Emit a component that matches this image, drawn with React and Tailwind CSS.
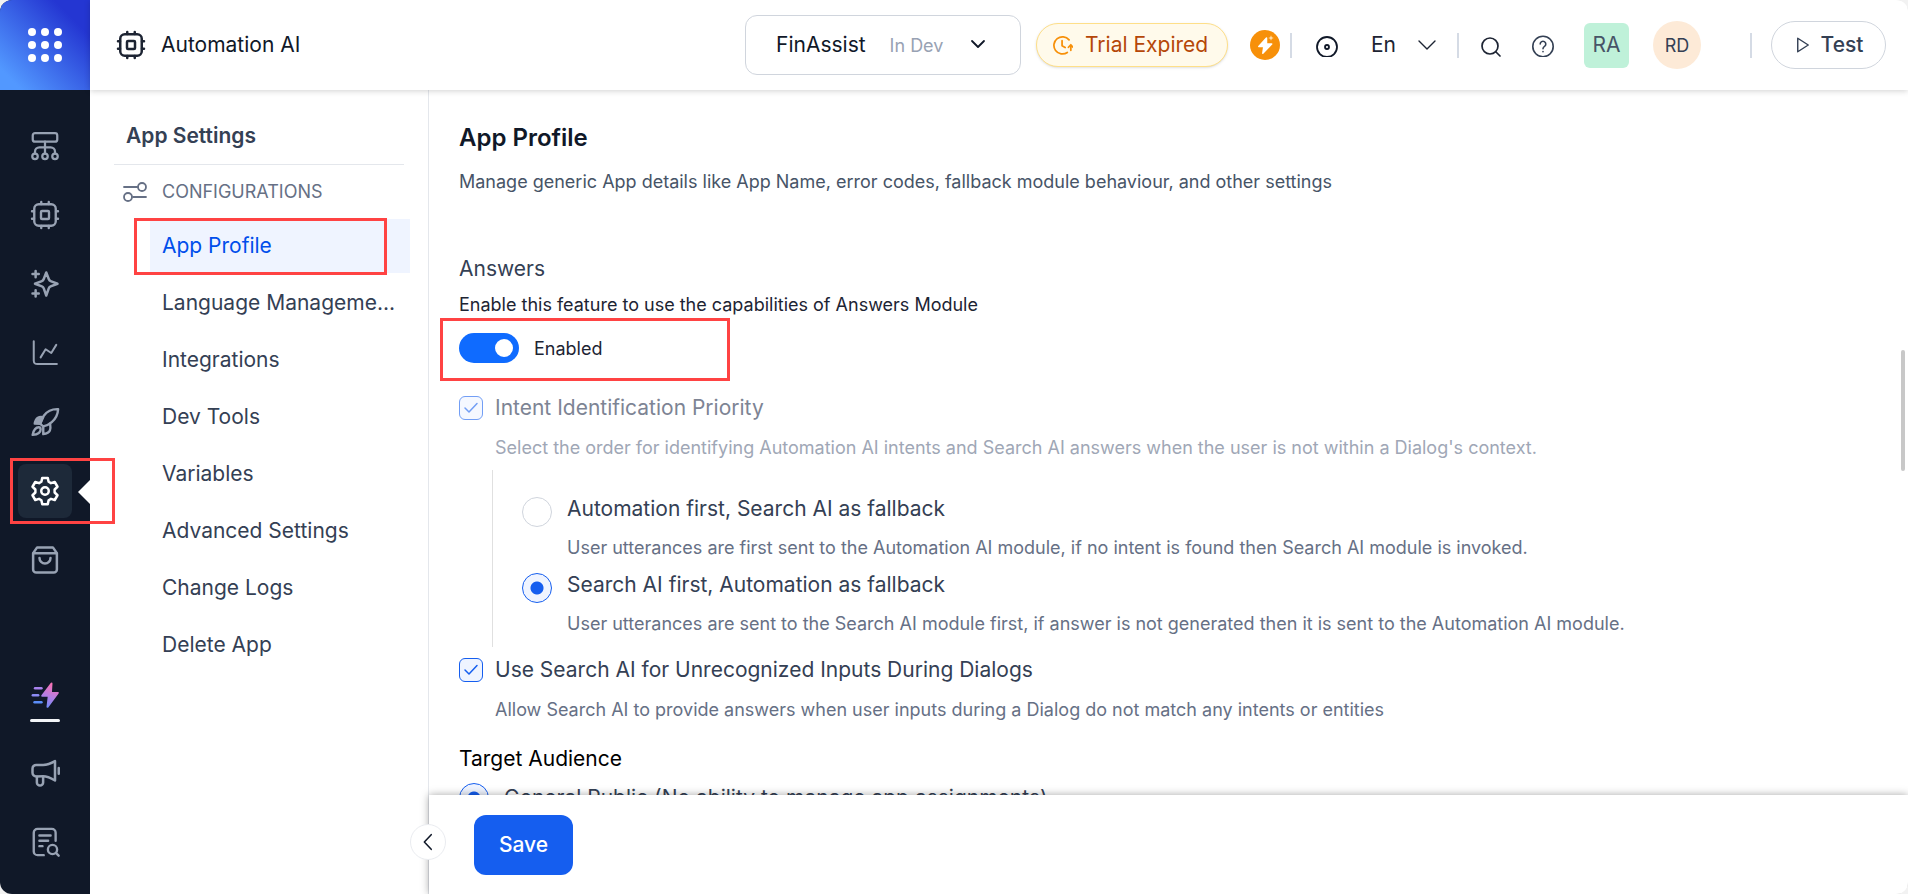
import React from "react";

function Icon({ size = 30, stroke = 2, className = "", children, box = "0 0 24 24" }) {
  return (
    <svg
      aria-hidden="true"
      width={size}
      height={size}
      viewBox={box}
      fill="none"
      stroke="currentColor"
      strokeWidth={stroke}
      strokeLinecap="round"
      strokeLinejoin="round"
      className={"shrink-0 " + className}
    >
      {children}
    </svg>
  );
}

const ChipIcon = (props) => (
  <Icon {...props}>
    <rect x="3.4" y="3.4" width="17.2" height="17.2" rx="3.6" />
    <rect x="8.8" y="8.8" width="6.4" height="6.4" rx="0.8" />
    <path d="M9 1.6v1.6M15 1.6v1.6M9 20.8v1.6M15 20.8v1.6M1.6 9h1.6M1.6 15h1.6M20.8 9h1.6M20.8 15h1.6" />
  </Icon>
);

const FlowIcon = () => (
  <Icon stroke={1.8}>
    <rect x="2.2" y="1.7" width="19.6" height="6.8" rx="1.8" />
    <path d="M12 8.500v9.500M4 18v-1.500A3.500 3.500 0 0 1 7.500 13h9a3.500 3.500 0 0 1 3.500 3.500V18" />
    <circle cx="4" cy="20.200" r="2.200" />
    <circle cx="12" cy="20.200" r="2.200" />
    <circle cx="20" cy="20.200" r="2.200" />
  </Icon>
);

const SparkIcon = () => (
  <Icon stroke={2}>
    <path d="M13 2.800l2 5.200c.3.900.700 1.400 1.500 1.700l5.500 2.100-5.500 2.100c-.8.300-1.200.8-1.500 1.600l-2 5.700-2-5.700c-.3-.8-.7-1.300-1.500-1.600L4 11.800l5.500-2.100c.8-.3 1.200-.8 1.500-1.700z" />
    <path d="M4.500 1.500v5M2 4h5M4.500 17v5M2 19.500h5" />
  </Icon>
);

const ChartIcon = () => (
  <Icon stroke={1.600}>
    <path d="M3 2.500v15.500c0 1.400.3 2 1 2.400.500.300 1 .3 2 .3h15.500" />
    <path d="M8.500 15.500l4-6.500 4.500 3 4-6.500" />
  </Icon>
);

const RocketIcon = () => (
  <Icon stroke={1.900}>
    <path d="M22.500 1.700c-4.500-.2-8.500 1.300-11.300 5.100C9.600 9 8.600 11.300 8.200 13.500l2.400 2c2.200-.4 4.800-1.600 6.800-3.400 3.600-3.100 4.900-6.600 5.100-10.400z" />
    <path d="M10.500 8.200c-3-.6-4.600 0-5.800 2.200-.5 1-.8 2-.9 2.900l4.400.2z" fill="currentColor" />
    <path d="M10.600 15.700v6c2.300-.3 4.500-.9 5.300-2.900.600-1.600.500-3.500.2-5.400M7 16.200c-2.500 0-4 1.800-4.900 6.100 4.400-.5 6.400-1.900 6.400-4.400 0-.9-.6-1.700-1.500-1.700z" />
  </Icon>
);

const GearIcon = () => (
  <Icon stroke={2}>
    <circle cx="12" cy="12" r="3" />
    <path d="M9.800 1.500h4.400l.7 3.100 1.900 1.100 3-.9 2.200 3.800-2.300 2.200v2.400l2.300 2.200-2.200 3.800-3-.9-1.900 1.100-.7 3.100H9.800l-.7-3.100-1.900-1.100-3 .9L2 15.400l2.300-2.200v-2.400L2 8.600l2.200-3.800 3 .9 1.900-1.100z" />
  </Icon>
);

const BagIcon = () => (
  <Icon stroke={2}>
    <path d="M2.500 6.500v13a2.500 2.500 0 0 0 2.500 2.500h14a2.500 2.500 0 0 0 2.500-2.500v-13L18.300 1.900H5.700z" />
    <path d="M2.800 6.500h18.400M7.600 10.400a4.400 4.400 0 0 0 8.800 0" />
  </Icon>
);

const MegaphoneIcon = () => (
  <Icon stroke={2}>
    <path d="M20 2.500v15.500c-4-2.300-6-3.300-9.500-3.300H5a3 3 0 0 1-3-3V8.500a3 3 0 0 1 3-3h5.500c4 0 6.500-1.300 9.500-3z" />
    <path d="M5.500 15v4.500a2.500 2.500 0 0 0 5 0V15M23 8v4.500" />
  </Icon>
);

const DocSearchIcon = () => (
  <Icon stroke={1.900}>
    <path d="M20.500 11V4.500a3 3 0 0 0-3-3H6a3 3 0 0 0-3 3v15a3 3 0 0 0 3 3h5" />
    <path d="M7.500 6.800h9M7.500 11h7M7.500 15.300h2.500" />
    <circle cx="18" cy="18" r="3.700" />
    <path d="M20.900 20.900l2 2" />
  </Icon>
);

const QuickIcon = () => (
  <svg aria-hidden="true" width="30" height="30" viewBox="0 0 30 30" className="shrink-0">
    <defs>
      <linearGradient id="quick" gradientUnits="userSpaceOnUse" x1="20" y1="4" x2="12" y2="26">
        <stop offset="0" stopColor="#f472b6" />
        <stop offset="0.55" stopColor="#b07fe6" />
        <stop offset="1" stopColor="#6b8cf8" />
      </linearGradient>
    </defs>
    <path d="M21.500 3.500 12.200 15.800h6.600l-1.300 11 10.300-13.900h-6.900z" fill="url(#quick)" stroke="url(#quick)" strokeWidth="2" strokeLinejoin="round" />
    <g strokeWidth="2.400" strokeLinecap="round">
      <path d="M5 8.200h6.500" stroke="#a882ee" />
      <path d="M2.800 15.200h5.400" stroke="#8b8af3" />
      <path d="M4.500 22.200h7" stroke="#5b8df8" />
    </g>
  </svg>
);

const railItems = [
  { name: "Flows", icon: <FlowIcon /> },
  { name: "Automation", icon: <ChipIcon stroke={1.900} /> },
  { name: "Generative AI", icon: <SparkIcon /> },
  { name: "Analytics", icon: <ChartIcon /> },
  { name: "Deploy", icon: <RocketIcon /> },
  { name: "Settings", icon: <GearIcon />, active: true },
  { name: "Marketplace", icon: <BagIcon /> },
];

function Highlight({ className }) {
  return <div aria-hidden="true" className={"pointer-events-none absolute z-30 border-3 border-[#ff4343] " + className} />;
}

function Rail() {
  return (
    <nav aria-label="Main" className="flex w-[90px] shrink-0 flex-col bg-[#101828] text-[#98a2b3]">
      <button
        type="button"
        aria-label="All products"
        className="flex size-[90px] shrink-0 items-center justify-center bg-[linear-gradient(45deg,#5298ff_12%,#2436d2_80%)]"
      >
        <svg aria-hidden="true" width="36" height="36" viewBox="0 0 36 36" fill="#fff">
          {[5, 18, 31].map((y) => [5, 18, 31].map((x) => <circle key={x + "-" + y} cx={x} cy={y} r="4" />))}
        </svg>
      </button>
      <div className="flex flex-col items-center gap-[15px] pt-[29px]">
        {railItems.map((item) => (
          <div key={item.name} className="relative flex w-full justify-center">
            <button
              type="button"
              aria-label={item.name}
              className={
                item.active
                  ? "flex size-[54px] items-center justify-center rounded-lg bg-[#1d2939] text-white"
                  : "flex size-[54px] items-center justify-center rounded-lg"
              }
            >
              {item.icon}
            </button>
            {item.active && (
              <>
                <svg aria-hidden="true" width="12" height="24" viewBox="0 0 12 24" className="absolute top-4 right-0">
                  <path d="M12 0v24L0 12z" fill="#fff" />
                </svg>
                <Highlight className="-top-1.5 left-[10px] h-[66px] w-[105px]" />
              </>
            )}
          </div>
        ))}
      </div>
      <div className="mt-auto flex flex-col items-center gap-[15px] pb-[25px]">
        <button type="button" aria-label="Quick start" className="mb-[9px] flex h-[54px] w-[54px] flex-col items-center justify-end gap-[9px]">
          <QuickIcon />
          <span className="h-[3px] w-[30px] shrink-0 rounded-full bg-[#f2f4f7]" />
        </button>
        <button type="button" aria-label="Announcements" className="flex size-[54px] items-center justify-center">
          <MegaphoneIcon />
        </button>
        <button type="button" aria-label="Logs" className="flex size-[54px] items-center justify-center">
          <DocSearchIcon />
        </button>
      </div>
    </nav>
  );
}

function Divider({ className = "" }) {
  return <span className={"h-[25px] w-[2px] shrink-0 bg-[#d5dbe5] " + className} />;
}

function Header() {
  return (
    <header className="relative z-20 flex h-[90px] shrink-0 items-center bg-white pr-[22px] pl-[26px] shadow-[0_1px_6px_rgba(0,0,0,0.18)]">
      <ChipIcon stroke={2} className="text-[#1d2433]" />
      <h1 className="ml-[15px] text-[21px] leading-[30px] text-[#101828]">Automation AI</h1>

      <button
        type="button"
        aria-haspopup="listbox"
        className="ml-auto flex h-[60px] w-[276px] shrink-0 items-center rounded-xl border border-[#d0d5dd] px-[30px] text-[#101828]"
      >
        <span className="text-[21px]">FinAssist</span>
        <span className="ml-6 text-[18px] text-[#98a2b3]">In Dev</span>
        <Icon size={24} stroke={1.800} className="ml-auto">
          <path d="M6 8l6 6 6-6" />
        </Icon>
      </button>

      <div className="ml-[15px] flex h-[44px] w-[192px] shrink-0 items-center rounded-full border border-[#fedf89] bg-[#fffaeb] pl-[15px] text-[21px] text-[#b54708] shadow-sm">
        <Icon size={21} stroke={2} className="mr-3 text-[#f79009]">
          <path d="M17.500 20A9.800 9.800 0 1 1 19.500 5.600M11.500 6.500v5.800l3.500 2M21.500 17.500v-6M18.800 14l2.700-2.800L24 14" />
        </Icon>
        Trial Expired
      </div>

      <svg role="img" aria-label="Upgrade" width="30" height="30" viewBox="0 0 30 30" className="ml-[22px] shrink-0">
        <circle cx="15" cy="15" r="15" fill="#f79009" />
        <path d="M16.500 8 8.800 16.500h5l-1 6.800 8.900-9.300h-5.200z" fill="#fff" stroke="#fff" strokeWidth="1.500" strokeLinejoin="round" />
        <path d="M21 5.200l.8 2 2 .8-2 .8-.8 2-.8-2-2-.8 2-.8z" fill="#ffe0b0" />
      </svg>
      <Divider className="ml-[10px]" />
      <button type="button" aria-label="Status" className="ml-[23px] shrink-0 text-[#101828]">
        <Icon size={24} stroke={1.800}>
          <circle cx="12" cy="14" r="10" />
          <circle cx="12" cy="14" r="2" />
        </Icon>
      </button>
      <div className="ml-[32px] grid w-[68px] shrink-0 items-center">
        <select aria-label="Language" defaultValue="En" className="col-start-1 row-start-1 w-full appearance-none bg-transparent text-[21px] text-[#1d2433]">
          <option>En</option>
        </select>
        <Icon size={24} stroke={1.400} className="pointer-events-none col-start-1 row-start-1 justify-self-end text-[#1d2433]">
          <path d="M4 8l8 8 8-8" />
        </Icon>
      </div>
      <Divider className="ml-[18px]" />
      <button type="button" aria-label="Search" className="ml-[20px] shrink-0 text-[#1d2433]">
        <Icon size={24} stroke={1.700}>
          <circle cx="11" cy="13" r="8" />
          <path d="M17 19l4 4" />
        </Icon>
      </button>
      <button type="button" aria-label="Help" className="ml-[28px] shrink-0 text-[#344054]">
        <Icon size={24} stroke={1.600}>
          <circle cx="12" cy="13.500" r="10.200" />
          <path d="M9.200 11a2.800 2.800 0 1 1 4.300 2.400c-1 .7-1.500 1.100-1.500 2.300M12 18.500v.3" />
        </Icon>
      </button>
      <span className="ml-[29px] flex size-[45px] shrink-0 items-center justify-center rounded-md bg-[#bff1d9] text-[21px] text-[#475467]">RA</span>
      <span className="ml-6 flex size-12 shrink-0 items-center justify-center rounded-full bg-[#fdead7] text-[18px] text-[#344054]">RD</span>
      <Divider className="ml-[49px]" />
      <button
        type="button"
        className="ml-[19px] flex h-12 w-[115px] shrink-0 items-center justify-center gap-[9px] rounded-full border border-[#d0d5dd] text-[21px] font-medium text-[#344054]"
      >
        <Icon size={18} stroke={1.900}>
          <path d="M5 3l14 9-14 9z" />
        </Icon>
        Test
      </button>
    </header>
  );
}

const settings = [
  "Language Manageme...",
  "Integrations",
  "Dev Tools",
  "Variables",
  "Advanced Settings",
  "Change Logs",
  "Delete App",
];

function SettingsNav() {
  return (
    <aside className="relative w-[339px] shrink-0 border-r border-[#e4e7ec] bg-white pt-[31px]">
      <h2 className="pl-9 text-[21px] leading-[30px] font-semibold text-[#344054]">App Settings</h2>
      <hr className="mt-[13px] mr-6 ml-6 border-[#e4e7ec]" />
      <div className="mt-[12px] flex items-center pl-[33px] text-[#667085]">
        <svg aria-hidden="true" width="24" height="24" viewBox="0 0 24 24" fill="none" stroke="currentColor" strokeWidth="1.800" strokeLinecap="round">
          <path d="M1 7h14M10 17h13" />
          <circle cx="19" cy="7" r="4" />
          <circle cx="5" cy="17" r="4" />
        </svg>
        <h3 className="ml-[15px] text-[18px] leading-[30px]">CONFIGURATIONS</h3>
      </div>
      <ul className="mt-3 mr-[18px] ml-[60px] flex flex-col gap-[3px] text-[21px] leading-[54px] text-[#344054]">
        <li className="relative">
          <a href="#app-profile" aria-current="page" className="block bg-[#eff4ff] px-3 text-[#004eeb]">
            App Profile
          </a>
          <Highlight className="-top-[1px] -left-4 h-[57px] w-[253px]" />
        </li>
        {settings.map((name) => (
          <li key={name}>
            <a href="#settings" className="block pl-3 whitespace-nowrap">
              {name}
            </a>
          </li>
        ))}
      </ul>
      <button
        type="button"
        aria-label="Collapse settings"
        className="absolute -right-[18px] bottom-[34px] z-20 flex size-9 items-center justify-center rounded-full border border-[#eaecf0] bg-white text-[#101828]"
      >
        <Icon size={22} stroke={1.700}>
          <path d="M15.500 4l-7.500 8 7.500 8" />
        </Icon>
      </button>
    </aside>
  );
}

function Checkbox({ id, faded }) {
  return (
    <span className={faded ? "grid size-6 shrink-0 opacity-60" : "grid size-6 shrink-0"}>
      <input
        id={id}
        type="checkbox"
        defaultChecked
        className="col-start-1 row-start-1 size-6 appearance-none rounded-md border border-[#155eef] bg-[#eff4ff]"
      />
      <svg aria-hidden="true" viewBox="0 0 24 24" className="pointer-events-none col-start-1 row-start-1 size-6" fill="none" stroke="#155eef" strokeWidth="1.500" strokeLinecap="round" strokeLinejoin="round">
        <path d="M6 12l4 4 8-8.500" />
      </svg>
    </span>
  );
}

function Radio({ id, name, checked }) {
  return (
    <input
      id={id}
      type="radio"
      name={name}
      defaultChecked={checked}
      className="size-[30px] shrink-0 appearance-none rounded-full border border-[#d0d5dd] bg-white checked:border-[#155eef] checked:bg-[radial-gradient(circle,#155eef_6px,#eff4ff_7px)]"
    />
  );
}

const optionText = "text-[21px] leading-[30px] text-[#344054]";
const hintText = "text-[18px] leading-[27px] text-[#667085]";

function Profile() {
  return (
    <main className="flex min-w-0 flex-1 flex-col">
      <div className="relative min-h-0 flex-1 overflow-hidden pt-[33px] pl-[30px]">
        <h2 className="text-[24px] leading-[30px] font-semibold text-[#101828]">App Profile</h2>
        <p className="mt-[15px] text-[18px] leading-[27px] text-[#475467]">
          Manage generic App details like App Name, error codes, fallback module behaviour, and other settings
        </p>

        <h3 className="mt-[59px] text-[21px] leading-[30px] text-[#344054]">Answers</h3>
        <p className="mt-[7px] text-[18px] leading-[27px] text-[#1d2433]">
          Enable this feature to use the capabilities of Answers Module
        </p>
        <div className="relative mt-[15px] flex items-center gap-[15px]">
          <input
            id="answers"
            type="checkbox"
            role="switch"
            defaultChecked
            className="flex h-[30px] w-[60px] appearance-none items-center rounded-full bg-[#0f6bff] px-1.5 before:size-[18px] before:rounded-full before:bg-white checked:before:ml-auto"
          />
          <label htmlFor="answers" className="text-[18px] leading-[27px] text-[#1d2433]">
            Enabled
          </label>
          <Highlight className="-top-[15px] -left-[19px] h-[63px] w-[290px]" />
        </div>

        <div className="mt-[30px] flex items-center gap-3">
          <Checkbox id="priority" faded />
          <label htmlFor="priority" className="text-[21px] leading-[30px] text-[#7d8494]">
            Intent Identification Priority
          </label>
        </div>
        <p className="mt-[11px] ml-9 text-[18px] leading-[27px] text-[#a0a7b6]">
          Select the order for identifying Automation AI intents and Search AI answers when the user is not within a Dialog's context.
        </p>
        <div className="mt-[9px] ml-[33px] border-l border-[#e0e0e0] pt-6 pb-[10px] pl-[29px]">
          <div className="flex gap-[15px]">
            <div className="pt-[3px]">
              <Radio id="automation-first" name="priority-order" />
            </div>
            <div>
              <label htmlFor="automation-first" className={optionText}>
                Automation first, Search AI as fallback
              </label>
              <p className={"mt-[10px] " + hintText}>
                User utterances are first sent to the Automation AI module, if no intent is found then Search AI module is invoked.
              </p>
            </div>
          </div>
          <div className="mt-[9px] flex gap-[15px]">
            <div className="pt-[3px]">
              <Radio id="search-first" name="priority-order" checked />
            </div>
            <div>
              <label htmlFor="search-first" className={optionText}>
                Search AI first, Automation as fallback
              </label>
              <p className={"mt-[10px] " + hintText}>
                User utterances are sent to the Search AI module first, if answer is not generated then it is sent to the Automation AI module.
              </p>
            </div>
          </div>
        </div>

        <div className="mt-2 flex items-center gap-3">
          <Checkbox id="unrecognized" />
          <label htmlFor="unrecognized" className={optionText}>
            Use Search AI for Unrecognized Inputs During Dialogs
          </label>
        </div>
        <p className={"mt-[11px] ml-9 " + hintText}>
          Allow Search AI to provide answers when user inputs during a Dialog do not match any intents or entities
        </p>

        <h3 className="mt-[21px] text-[21px] leading-[30px] text-black">Target Audience</h3>
        <div className="mt-[9px] flex items-center gap-[15px]">
          <Radio id="public" name="audience" checked />
          <label htmlFor="public" className={optionText}>
            General Public (No ability to manage app assignments)
          </label>
        </div>

        <span aria-hidden="true" className="absolute top-[260px] right-[3px] h-[121px] w-1 rounded-full bg-[#c8c8c8]" />
      </div>
      <footer className="relative z-10 flex h-[99px] shrink-0 items-start bg-white pt-5 pl-[45px] shadow-[0_0_8px_rgba(0,0,0,0.35)]">
        <button type="button" className="h-[60px] w-[99px] rounded-xl bg-[#155eef] text-[21px] font-medium text-white">
          Save
        </button>
      </footer>
    </main>
  );
}

export default function App() {
  return (
    <div className="h-screen bg-[#f2f2f2]">
      <div className="flex h-full overflow-hidden rounded-xl bg-white font-[Inter,sans-serif]">
        <Rail />
        <div className="flex min-w-0 flex-1 flex-col">
          <Header />
          <div className="flex min-h-0 flex-1">
            <SettingsNav />
            <Profile />
          </div>
        </div>
      </div>
    </div>
  );
}
